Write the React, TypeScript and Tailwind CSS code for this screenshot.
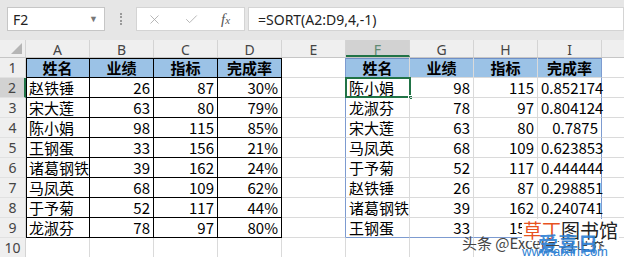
import clsx from "clsx";
import { Check, X } from "lucide-react";

const cols = ["A", "B", "C", "D", "E", "F", "G", "H", "I", "J"];

const heads = ["姓名", "业绩", "指标", "完成率"];

const source = [
    ["赵铁锤", "26", "87", "30%"],
    ["宋大莲", "63", "80", "79%"],
    ["陈小娟", "98", "115", "85%"],
    ["王钢蛋", "33", "156", "21%"],
    ["诸葛钢铁", "39", "162", "24%"],
    ["马凤英", "68", "109", "62%"],
    ["于予菊", "52", "117", "44%"],
    ["龙淑芬", "78", "97", "80%"],
];

const sorted = [
    ["陈小娟", "98", "115", "0.852174"],
    ["龙淑芬", "78", "97", "0.804124"],
    ["宋大莲", "63", "80", "0.7875"],
    ["马凤英", "68", "109", "0.623853"],
    ["于予菊", "52", "117", "0.444444"],
    ["赵铁锤", "26", "87", "0.298851"],
    ["诸葛钢铁", "39", "162", "0.240741"],
    ["王钢蛋", "33", "156", "0.211538"],
];

const cellFont = { fontFamily: '"Noto Sans CJK SC", "Noto Sans", sans-serif' };

// value shown in a sheet cell (row 1..10, col 0..9)
const valueAt = (r: number, c: number) => {
    if (r < 1 || r > 9) return "";
    if (c <= 3) return r === 1 ? heads[c] : source[r - 2][c];
    if (c >= 5 && c <= 8) return r === 1 ? heads[c - 5] : sorted[r - 2][c - 5];
    return "";
};

const SheetCell = ({ r, c }: { r: number; c: number }) => {
    const inLeft = c <= 3 && r >= 1 && r <= 9;
    const inRight = c >= 5 && c <= 8 && r >= 1 && r <= 9;
    const isHead = (inLeft || inRight) && r === 1;
    const isName = c === 0 || c === 5;
    const value = valueAt(r, c);

    return (
        <div
            className={clsx(
                "relative h-full w-16 shrink-0 overflow-visible whitespace-nowrap border-r border-b px-[3px] text-[15px] leading-[19px] text-black",
                inLeft ? "border-black" : "border-[#dadada]",
                inLeft && c === 0 && r === 1 && "shadow-[inset_1px_1px_0_#000]",
                inLeft && c === 0 && r !== 1 && "shadow-[inset_1px_0_0_#000]",
                inLeft && c !== 0 && r === 1 && "shadow-[inset_0_1px_0_#000]",
                inRight && r === 1 && "shadow-[inset_0_1px_0_#6f8fc6]",
                c === 4 && r >= 1 && r <= 9 && "border-r-[#7d9bd0]",
                c === 8 && r >= 1 && r <= 9 && "border-r-[#7d9bd0]",
                inRight && r === 9 && "border-b-[#7d9bd0]",
                isHead && "bg-[#9bc2e6] text-center font-bold",
                !isHead && (isName ? "text-left" : "text-right")
            )}
            style={cellFont}
        >
            {value}
            {r === 2 && c === 5 && (
                <div className="absolute -top-px -left-px h-[21px] w-[66px] border-2 border-[#217346]">
                    <div className="absolute -right-[4px] -bottom-[4px] h-[5px] w-[5px] border border-white bg-[#217346]" />
                </div>
            )}
        </div>
    );
};

export default function App() {
    return (
        <div className="relative h-[257px] w-[624px] overflow-hidden bg-white">
            {/* formula bar */}
            <div
                className="flex h-[40px] items-start bg-[#e6e6e6] pt-[7px] text-[14px] text-[#222]"
                style={{ fontFamily: '"Noto Sans", "Open Sans", sans-serif' }}
            >
                <div className="ml-[7px] flex h-[24px] w-[98px] items-center justify-between border border-[#c6c6c6] bg-white pl-[5px] pr-[6px]">
                    <span>F2</span>
                    <span className="text-[9px] text-[#777]">▼</span>
                </div>
                <div className="flex w-[31px] justify-center pt-[6px]">
                    <div className="h-[12px] border-l-2 border-dotted border-[#9a9a9a]" />
                </div>
                <div className="flex h-[24px] w-[109px] items-center border border-[#d4d4d4] bg-white text-[#a6a6a6]">
                    <X className="ml-[10px] h-[15px] w-[15px]" strokeWidth={1.3} />
                    <Check className="ml-[22px] h-[15px] w-[15px]" strokeWidth={1.3} />
                    <span
                        className="ml-[22px] text-[15px] italic text-[#555]"
                        style={{ fontFamily: '"Liberation Serif", serif' }}
                    >
                        f<span className="text-[11px]">x</span>
                    </span>
                </div>
                <div className="ml-[3px] flex h-[24px] flex-1 items-center border border-[#d4d4d4] bg-white pl-[9px]">
                    =SORT(A2:D9,4,-1)
                </div>
            </div>

            {/* column headers */}
            <div
                className="flex h-[18px] border-b border-[#c6c6c6] bg-[#efefef] text-[14px] leading-[19px] text-[#444]"
                style={{ fontFamily: '"Noto Sans", sans-serif' }}
            >
                <div className="relative w-[26px] shrink-0 border-r border-[#d4d4d4]">
                    <svg className="absolute right-[3px] bottom-[3px]" width="11" height="11" viewBox="0 0 12 12">
                        <polygon points="12,0 12,12 0,12" fill="#b5b5b5" />
                    </svg>
                </div>
                {cols.map((col) => (
                    <div
                        key={col}
                        className={clsx(
                            "w-16 shrink-0 border-r border-[#d4d4d4] text-center",
                            col === "F" && "border-b-2 border-b-[#217346] bg-[#d2d2d2] text-[#5f8a72]"
                        )}
                    >
                        {col}
                    </div>
                ))}
            </div>

            {/* sheet rows */}
            {Array.from({ length: 10 }, (_, i) => i + 1).map((r) => (
                <div key={r} className="flex h-[20px]">
                    <div
                        className={clsx(
                            "w-[26px] shrink-0 border-r border-b border-[#d4d4d4] border-b-[#e1e1e1] text-center text-[14px] leading-[19px] text-[#444]",
                            r === 2 ? "border-r-2 border-r-[#217346] bg-[#d2d2d2] text-[#5f8a72]" : "bg-[#efefef]"
                        )}
                        style={{ fontFamily: '"Noto Sans", sans-serif' }}
                    >
                        {r}
                    </div>
                    {cols.map((_, c) => (
                        <SheetCell key={c} r={r} c={c} />
                    ))}
                </div>
            ))}

            {/* watermark */}
            <div
                className="absolute left-[462px] top-[233px] text-[15px] leading-[20px] text-[#444]"
                style={{ fontFamily: '"Noto Sans CJK SC", sans-serif' }}
            >
                头条 @Excel学习世界
            </div>
            <div
                className="absolute left-[522px] top-[219px] bg-white px-[1px] text-[19px] leading-[22px] text-[#222]"
                style={{ fontFamily: '"Noto Sans CJK SC", sans-serif' }}
            >
                <span className="text-[#e8531f]">草丁</span>图书馆
            </div>
            <div
                className="absolute left-[538px] top-[233px] text-[20px] font-bold leading-[22px] text-[#2d7fd3] opacity-90"
                style={{ fontFamily: '"Noto Sans CJK SC", sans-serif' }}
            >
                爱喜日
            </div>
            <div
                className="absolute left-[522px] top-[245px] text-[13px] leading-[14px] text-[#2d7fd3]"
                style={{ fontFamily: '"Liberation Sans", sans-serif' }}
            >
                www.aixiri.com
            </div>
        </div>
    );
}
